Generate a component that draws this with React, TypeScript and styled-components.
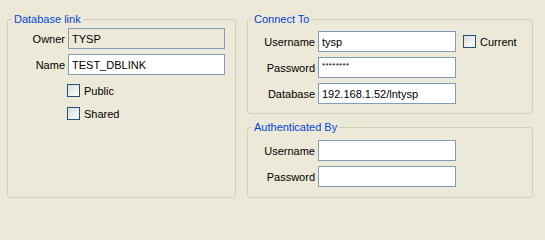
import React from "react";
import styled, { createGlobalStyle } from "styled-components";

const GlobalStyle = createGlobalStyle`
  html, body {
    margin: 0;
    padding: 0;
    background: #ece9d8;
  }
  body {
    font-family: "Liberation Sans", Arial, sans-serif;
    font-size: 11px;
    color: #000;
  }
`;

const Page = styled.div`
  display: flex;
  align-items: flex-start;
  gap: 11px;
  padding: 13px 0 0 7px;
  width: 545px;
  height: 217px;
  box-sizing: border-box;
`;

const Group = styled.fieldset<{ $w: number; $h: number; $top: number }>`
  box-sizing: border-box;
  width: ${(p) => p.$w}px;
  height: ${(p) => p.$h}px;
  margin: 0;
  padding: ${(p) => p.$top}px 0 0 0;
  border: 1px solid #d0d0bf;
  border-radius: 3px;
  min-width: 0;
`;

const Legend = styled.legend`
  margin-left: 4px;
  padding: 0 2px;
  font-size: 11px;
  line-height: 13px;
  color: #0046d5;
`;

const Column = styled.div`
  display: flex;
  flex-direction: column;
  gap: 7px;
`;

const Form = styled.div<{ $label: number; $field: number }>`
  display: grid;
  grid-template-columns: ${(p) => p.$label}px ${(p) => p.$field}px auto;
  column-gap: 3px;
  row-gap: 5px;
  align-items: center;
`;

const Label = styled.label`
  text-align: right;
  white-space: nowrap;
`;

const Field = styled.input<{ $disabled?: boolean; $masked?: boolean }>`
  box-sizing: border-box;
  height: 21px;
  width: 100%;
  margin: 0;
  padding: ${(p) => (p.$masked ? "0 3px 5px 3px" : "0 3px")};
  border: 1px solid #7f9db9;
  border-radius: 0;
  outline: none;
  background: ${(p) => (p.$disabled ? "#ece9d8" : "#fff")};
  font-family: "Liberation Sans", Arial, sans-serif;
  font-size: ${(p) => (p.$masked ? "8px" : "11px")};
  letter-spacing: ${(p) => (p.$masked ? "0.3px" : "0")};
  color: #000;
`;

const Checks = styled.div`
  display: flex;
  flex-direction: column;
  gap: 6px;
  padding: 7px 0 0 59px;
`;

const CheckRow = styled.label<{ $pad?: number }>`
  display: flex;
  align-items: center;
  gap: 4px;
  height: 17px;
  padding-left: ${(p) => p.$pad || 0}px;
  white-space: nowrap;
`;

const Box = styled.span`
  box-sizing: border-box;
  width: 13px;
  height: 13px;
  border: 1px solid #1c5180;
  background: linear-gradient(135deg, #dcdcd7 0%, #f4f4f0 70%, #ffffff 100%);
`;

const Check = ({ label, pad }: { label: string; pad?: number }) => (
  <CheckRow $pad={pad}>
    <Box />
    <span>{label}</span>
  </CheckRow>
);

export default function App() {
  return (
    <>
      <GlobalStyle />
      <Page>
        <Group $w={229} $h={185} $top={2}>
          <Legend>Database link</Legend>
          <Form $label={57} $field={157}>
            <Label>Owner</Label>
            <Field $disabled readOnly value="TYSP" />
            <span />
            <Label>Name</Label>
            <Field readOnly value="TEST_DBLINK" />
            <span />
          </Form>
          <Checks>
            <Check label="Public" />
            <Check label="Shared" />
          </Checks>
        </Group>
        <Column>
          <Group $w={286} $h={101} $top={5}>
            <Legend>Connect To</Legend>
            <Form $label={67} $field={138}>
              <Label>Username</Label>
              <Field readOnly value="tysp" />
              <Check label="Current" pad={4} />
              <Label>Password</Label>
              <Field $masked readOnly value="********" />
              <span />
              <Label>Database</Label>
              <Field readOnly value="192.168.1.52/lntysp" />
              <span />
            </Form>
          </Group>
          <Group $w={286} $h={77} $top={6}>
            <Legend>Authenticated By</Legend>
            <Form $label={67} $field={138}>
              <Label>Username</Label>
              <Field readOnly value="" />
              <span />
              <Label>Password</Label>
              <Field readOnly value="" />
              <span />
            </Form>
          </Group>
        </Column>
      </Page>
    </>
  );
}
